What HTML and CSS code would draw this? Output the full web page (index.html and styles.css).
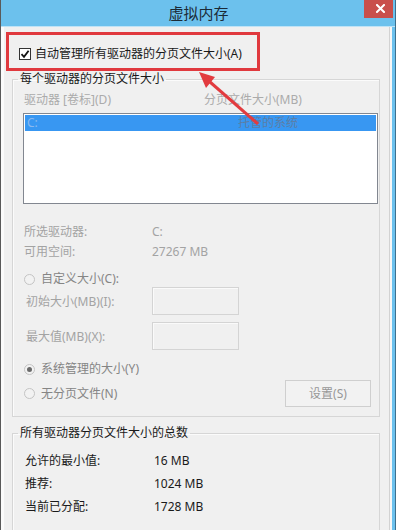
FILE: index.html
```html
<!DOCTYPE html>
<html lang="zh-CN">
<head>
<meta charset="utf-8">
<title>虚拟内存</title>
<link rel="stylesheet" href="styles.css">
</head>
<body>
<div class="window">
  <div class="titlebar">
    <span class="title-spacer"></span>
    <span class="title">虚拟内存</span>
    <span class="close"><svg width="9" height="9" viewBox="0 0 9 9"><path d="M1 1L8 8M8 1L1 8" stroke="#fff" stroke-width="2" stroke-linecap="square"/></svg></span>
  </div>
  <div class="client">
    <div class="auto-row">
      <span class="checkbox"><svg width="10" height="10" viewBox="0 0 10 10"><path d="M1.5 5.2L4 7.8L8.6 1.8" fill="none" stroke="#111" stroke-width="1.8"/></svg></span>
      <span class="auto-label">自动管理所有驱动器的分页文件大小(A)</span>
    </div>

    <fieldset class="group group-drives">
      <legend>每个驱动器的分页文件大小</legend>
      <div class="group-body">
        <div class="list-head">
          <span class="head-col">驱动器 [卷标](D)</span>
          <span>分页文件大小(MB)</span>
        </div>
        <div class="listbox">
          <div class="list-row selected">
            <span class="row-drive">C:</span>
            <span class="row-size">托管的系统</span>
          </div>
        </div>
        <div class="info">
          <div class="kv"><span class="k">所选驱动器:</span><span>C:</span></div>
          <div class="kv"><span class="k">可用空间:</span><span>27267 MB</span></div>
        </div>
        <div class="radio-row first-radio">
          <span class="radio"></span><span class="radio-label">自定义大小(C):</span>
        </div>
        <div class="input-row">
          <span class="k indent">初始大小(MB)(I):</span><span class="input"></span>
        </div>
        <div class="input-row second-input">
          <span class="k indent">最大值(MB)(X):</span><span class="input"></span>
        </div>
        <div class="radio-row system-radio">
          <span class="radio checked"></span><span class="radio-label">系统管理的大小(Y)</span>
        </div>
        <div class="last-row">
          <div class="radio-row">
            <span class="radio"></span><span class="radio-label">无分页文件(N)</span>
          </div>
          <span class="button">设置(S)</span>
        </div>
      </div>
    </fieldset>

    <fieldset class="group group-total">
      <legend>所有驱动器分页文件大小的总数</legend>
      <div class="total-body">
        <span class="tk">允许的最小值:</span><span>16 MB</span>
        <span class="tk">推荐:</span><span>1024 MB</span>
        <span class="tk">当前已分配:</span><span>1728 MB</span>
      </div>
    </fieldset>
  </div>

  <div class="annot-box"></div>
  <svg class="annot-arrow" width="396" height="530" viewBox="0 0 396 530">
    <line x1="210" y1="82" x2="258" y2="124" stroke="#e23b3f" stroke-width="3"/>
    <polygon points="199,72 215,77 206,88" fill="#e23b3f"/>
  </svg>
</div>
</body>
</html>
```

FILE: styles.css
```css
* { box-sizing: border-box; }

html, body {
  margin: 0;
  padding: 0;
  background: #f0f0f0;
}

body {
  font-family: "Noto Sans", "Noto Sans CJK SC", sans-serif;
  font-size: 12px;
  line-height: 16px;
  color: #1a1a1a;
}

.window {
  position: relative;
  width: 396px;
  height: 530px;
  overflow: hidden;
  background: #f0f0f0;
  border-left: 1px solid #5a5a5a;
  border-right: 1px solid #3c6f8e;
  display: flex;
  flex-direction: column;
}

.titlebar {
  height: 27px;
  flex: none;
  display: flex;
  background: #6cc1ed;
  border-bottom: 1px solid #bfe3f6;
}

.title-spacer {
  width: 32px;
  flex: none;
}

.title {
  flex: 1;
  text-align: center;
  font-size: 15px;
  line-height: 26px;
  color: #1b2a36;
}

.close {
  width: 29px;
  height: 18px;
  margin-right: 2px;
  flex: none;
  background: #c94f4b;
  display: flex;
  align-items: center;
  justify-content: center;
  padding-left: 3px;
  padding-bottom: 1px;
}

.close svg { display: block; }

.client {
  flex: 1;
  display: flex;
  flex-direction: column;
  padding-top: 19px;
  border-right: 3px solid #6cc1ed;
  box-shadow: inset -2px 0 0 #f7f7f7, inset -3px 0 0 #d2d2d2, inset 3px 0 0 #fbfbfb;
}

.auto-row {
  display: flex;
  align-items: center;
  height: 16px;
  padding-left: 18px;
  gap: 4px;
}

.checkbox {
  width: 12px;
  height: 12px;
  border: 1px solid #333;
  background: #fff;
  display: flex;
  align-items: center;
  justify-content: center;
}

.checkbox svg { display: block; }

.group {
  margin: 9px 12px 0 11px;
  padding: 0;
  border: 1px solid #d6d6d6;
  box-shadow: inset 1px 1px 0 #fbfbfb;
  min-width: 0;
}

.group legend {
  margin-left: 5px;
  padding: 0 2px;
  font-size: 12px;
  line-height: 16px;
  color: #1a1a1a;
}

.group-drives { margin-top: 9px; }
.group-total { margin-top: 8px; }

.group-body {
  padding: 5px 8px 9px 11px;
  display: flex;
  flex-direction: column;
  color: #a3a3a3;
}

.list-head {
  display: flex;
  height: 16px;
  color: #ababab;
}

.head-col { width: 180px; }

.listbox {
  margin: 5px -7px 0 -1px;
  height: 91px;
  border: 1px solid #828790;
  background: #fff;
  padding: 1px;
}

.list-row {
  display: flex;
  height: 16px;
  padding-left: 2px;
}

.list-row.selected { background: #3897f2; }

.row-drive {
  width: 211px;
  color: #8ab9ee;
}

.row-size { color: #5c7ea6; }

.info {
  margin-top: 18px;
  display: flex;
  flex-direction: column;
}

.kv {
  display: flex;
  height: 20px;
  align-items: center;
}

.k { width: 128px; flex: none; }
.k.indent { padding-left: 2px; }

.radio-row {
  display: flex;
  align-items: center;
  height: 16px;
  gap: 6px;
  color: #858585;
}

.first-radio { margin-top: 9px; }
.system-radio { margin-top: 11px; }

.radio {
  width: 11px;
  height: 11px;
  border-radius: 50%;
  border: 1px solid #c4c4c4;
  background: #f2f2f2;
  display: flex;
  align-items: center;
  justify-content: center;
}

.radio.checked::after {
  content: "";
  width: 5px;
  height: 5px;
  border-radius: 50%;
  background: #6a6a6a;
}

.input-row {
  display: flex;
  align-items: center;
  height: 28px;
  padding-top: 2px;
}

.second-input { margin-top: 7px; }

.input {
  width: 87px;
  height: 28px;
  margin-top: -2px;
  border: 1px solid #d4d4d4;
  box-shadow: inset 1px 1px 0 #fafafa;
  background: #f0f0f0;
}

.last-row {
  margin-top: 3px;
  height: 27px;
  display: flex;
  align-items: center;
  justify-content: space-between;
}

.button {
  width: 86px;
  height: 27px;
  border: 1px solid #cfcfcf;
  background: #f2f2f2;
  color: #979797;
  display: flex;
  align-items: center;
  justify-content: center;
}

.total-body {
  padding: 12px 8px 40px 12px;
  display: grid;
  grid-template-columns: 129px 1fr;
  row-gap: 7px;
  color: #1a1a1a;
}

.annot-box {
  position: absolute;
  left: 5px;
  top: 32px;
  width: 254px;
  height: 39px;
  border: 3px solid #e0393e;
}

.annot-arrow {
  position: absolute;
  left: -1px;
  top: 0;
  pointer-events: none;
}
```
